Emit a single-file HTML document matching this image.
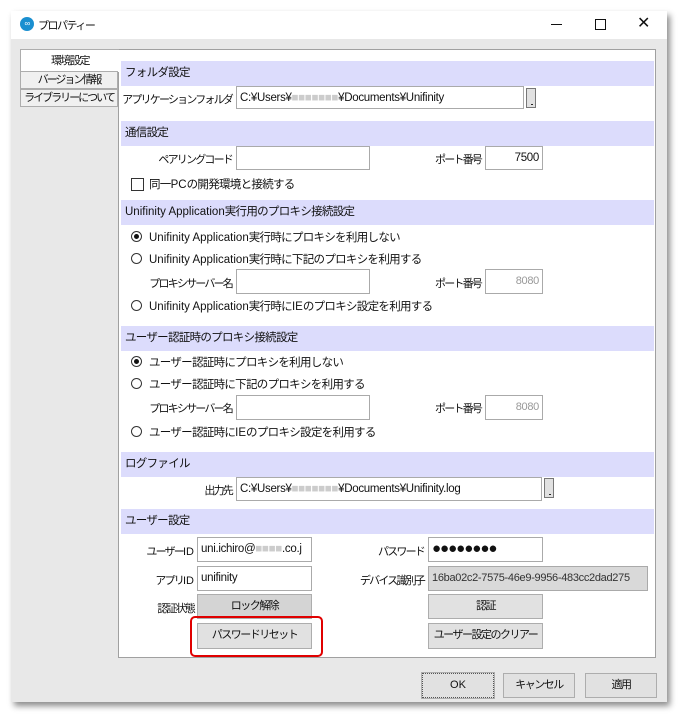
<!DOCTYPE html>
<html><head><meta charset="utf-8"><style>
body{margin:0;width:686px;height:721px;background:#fff;position:relative;overflow:hidden;font-family:"Liberation Sans","Noto Sans CJK JP",sans-serif;font-size:11.5px;letter-spacing:-0.7px;color:#111}
.a{position:absolute;white-space:nowrap}
.win{position:absolute;left:11px;top:11px;width:656px;height:691px;background:#e8e8e8;box-shadow:3px 4px 6px rgba(0,0,0,.45)}
.tb{position:absolute;left:11px;top:11px;width:656px;height:28px;background:#fff}
.panel{position:absolute;left:118px;top:49px;width:538px;height:609px;background:#fff;border:1px solid #a0a0a0;box-sizing:border-box}
.hd{position:absolute;left:121px;width:533px;height:25px;background:#dcdcfc;line-height:25px;text-indent:4px;white-space:nowrap}
.f{position:absolute;background:#fff;border:1px solid #aaa;box-sizing:border-box;line-height:22px;padding-left:3px;overflow:hidden;white-space:nowrap;letter-spacing:-0.3px}
.btn{position:absolute;background:#e1e1e1;border:1px solid #adadad;box-sizing:border-box;text-align:center;line-height:23px;white-space:nowrap;font-size:11px;letter-spacing:-1.5px}
.r{position:absolute;width:11px;height:11px;border:1px solid #333;border-radius:50%;box-sizing:border-box;background:#fff}
.r.on::after{content:"";position:absolute;left:2px;top:2px;width:5px;height:5px;border-radius:50%;background:#111}
.lb{position:absolute;text-align:right;white-space:nowrap;font-size:11px;letter-spacing:-1.8px}
.tab{position:absolute;left:20px;width:98px;height:18px;background:#f0f0f0;border:1px solid #adadad;box-sizing:border-box;text-align:center;line-height:16px;white-space:nowrap;font-size:11px;letter-spacing:-2px}
.sm{position:absolute;width:10px;height:20px;background:#e1e1e1;border:1px solid #777;box-sizing:border-box;font-size:9px;line-height:26px;text-align:center;letter-spacing:-2px}
.l{letter-spacing:0}
</style></head><body>
<div class="win"></div>
<div class="tb"></div>
<div class="a" style="left:20px;top:17px;width:14px;height:14px;border-radius:50%;background:#1a8fd0;color:#fff;font-size:8px;line-height:14px;text-align:center">∞</div>
<div class="a" style="left:38px;top:17px;font-size:11px;letter-spacing:-1.5px">プロパティー</div>
<div class="a" style="left:551px;top:24px;width:11px;height:1px;background:#111"></div>
<div class="a" style="left:595px;top:19px;width:9px;height:9px;border:1px solid #111"></div>
<div class="a" style="left:637px;top:13px;font-size:16px">✕</div>

<div class="panel"></div>
<div class="a" style="left:20px;top:49px;width:99px;height:23px;background:#fff;border:1px solid #adadad;border-right:none;border-bottom:none;box-sizing:border-box;text-align:center;line-height:22px;font-size:11px;letter-spacing:-1.5px">環境設定</div>
<div class="tab" style="top:71px">バージョン情報</div>
<div class="tab" style="top:89px">ライブラリーについて</div>

<div class="hd" style="top:61px">フォルダ設定</div>
<div class="lb" style="left:120px;top:91px;width:112px">アプリケーションフォルダ</div>
<div class="f" style="left:236px;top:86px;width:288px;height:23px">C:¥Users¥<span style="color:#ccc">■■■■■■■</span>¥Documents¥Unifinity</div>
<div class="sm" style="left:526px;top:88px">...</div>

<div class="hd" style="top:121px">通信設定</div>
<div class="lb" style="left:120px;top:151px;width:112px">ペアリングコード</div>
<div class="f" style="left:236px;top:146px;width:134px;height:24px"></div>
<div class="lb" style="left:420px;top:151px;width:61px">ポート番号</div>
<div class="f" style="left:485px;top:146px;width:58px;height:24px;text-align:right;padding-right:3px">7500</div>
<div class="a" style="left:131px;top:178px;width:11px;height:11px;border:1px solid #333;background:#fff"></div>
<div class="a" style="left:149px;top:176px">同一<span class="l">PC</span>の開発環境と接続する</div>

<div class="hd" style="top:200px"><span class="l">Unifinity Application</span>実行用のプロキシ接続設定</div>
<div class="r on" style="left:131px;top:231px"></div><div class="a" style="left:149px;top:229px"><span class="l">Unifinity Application</span>実行時にプロキシを利用しない</div>
<div class="r" style="left:131px;top:253px"></div><div class="a" style="left:149px;top:251px"><span class="l">Unifinity Application</span>実行時に下記のプロキシを利用する</div>
<div class="lb" style="left:130px;top:275px;width:102px">プロキシサーバー名</div>
<div class="f" style="left:236px;top:269px;width:134px;height:25px"></div>
<div class="lb" style="left:420px;top:275px;width:61px">ポート番号</div>
<div class="f" style="left:485px;top:269px;width:58px;height:25px;text-align:right;padding-right:3px;color:#999;font-size:11px">8080</div>
<div class="r" style="left:131px;top:300px"></div><div class="a" style="left:149px;top:298px"><span class="l">Unifinity Application</span>実行時に<span class="l">IE</span>のプロキシ設定を利用する</div>

<div class="hd" style="top:326px">ユーザー認証時のプロキシ接続設定</div>
<div class="r on" style="left:131px;top:356px"></div><div class="a" style="left:149px;top:354px">ユーザー認証時にプロキシを利用しない</div>
<div class="r" style="left:131px;top:378px"></div><div class="a" style="left:149px;top:376px">ユーザー認証時に下記のプロキシを利用する</div>
<div class="lb" style="left:130px;top:400px;width:102px">プロキシサーバー名</div>
<div class="f" style="left:236px;top:395px;width:134px;height:25px"></div>
<div class="lb" style="left:420px;top:400px;width:61px">ポート番号</div>
<div class="f" style="left:485px;top:395px;width:58px;height:25px;text-align:right;padding-right:3px;color:#999;font-size:11px">8080</div>
<div class="r" style="left:131px;top:426px"></div><div class="a" style="left:149px;top:424px">ユーザー認証時に<span class="l">IE</span>のプロキシ設定を利用する</div>

<div class="hd" style="top:452px">ログファイル</div>
<div class="lb" style="left:150px;top:482px;width:82px">出力先</div>
<div class="f" style="left:236px;top:477px;width:306px;height:24px">C:¥Users¥<span style="color:#ccc">■■■■■■■</span>¥Documents¥Unifinity.log</div>
<div class="sm" style="left:544px;top:478px">...</div>

<div class="hd" style="top:509px">ユーザー設定</div>
<div class="lb" style="left:120px;top:543px;width:74px">ユーザー<span class="l">ID</span></div>
<div class="f" style="left:197px;top:537px;width:115px;height:25px">uni.ichiro@<span style="color:#ccc">■■■■</span>.co.j</div>
<div class="lb" style="left:340px;top:543px;width:84px">パスワード</div>
<div class="f" style="left:428px;top:537px;width:115px;height:25px;font-size:15px;letter-spacing:-1px">●●●●●●●●</div>
<div class="lb" style="left:120px;top:572px;width:74px">アプリ<span class="l">ID</span></div>
<div class="f" style="left:197px;top:566px;width:115px;height:25px">unifinity</div>
<div class="lb" style="left:330px;top:572px;width:94px">デバイス識別子</div>
<div class="f" style="left:428px;top:566px;width:220px;height:25px;background:#d9d9d9;font-size:11px;color:#333">16ba02c2-7575-46e9-9956-483cc2dad275</div>
<div class="lb" style="left:120px;top:600px;width:74px">認証状態</div>
<div class="btn" style="left:197px;top:594px;width:115px;height:25px;background:#d4d4d4">ロック解除</div>
<div class="btn" style="left:428px;top:594px;width:115px;height:25px">認証</div>
<div class="btn" style="left:197px;top:623px;width:115px;height:26px">パスワードリセット</div>
<div class="btn" style="left:428px;top:623px;width:115px;height:26px">ユーザー設定のクリアー</div>
<div class="a" style="left:190px;top:616px;width:133px;height:41px;border:2px solid #e00000;border-radius:5px;box-sizing:border-box"></div>

<div class="btn" style="left:422px;top:673px;width:72px;height:25px;border:1px dotted #555;outline:1px solid #adadad;letter-spacing:0">OK</div>
<div class="btn" style="left:503px;top:673px;width:72px;height:25px">キャンセル</div>
<div class="btn" style="left:585px;top:673px;width:72px;height:25px">適用</div>
</body></html>
